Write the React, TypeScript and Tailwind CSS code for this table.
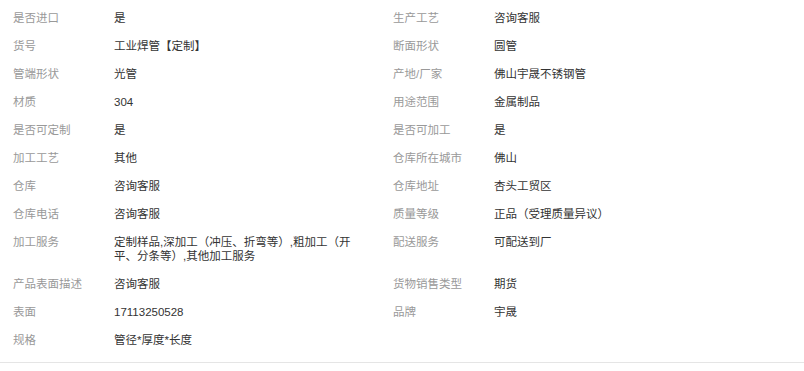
import React from "react";

type Attr = { label: string; value: string };

const rows: [Attr, Attr | null][] = [
  [{ label: "是否进口", value: "是" }, { label: "生产工艺", value: "咨询客服" }],
  [{ label: "货号", value: "工业焊管【定制】" }, { label: "断面形状", value: "圆管" }],
  [{ label: "管端形状", value: "光管" }, { label: "产地/厂家", value: "佛山宇晟不锈钢管" }],
  [{ label: "材质", value: "304" }, { label: "用途范围", value: "金属制品" }],
  [{ label: "是否可定制", value: "是" }, { label: "是否可加工", value: "是" }],
  [{ label: "加工工艺", value: "其他" }, { label: "仓库所在城市", value: "佛山" }],
  [{ label: "仓库", value: "咨询客服" }, { label: "仓库地址", value: "杏头工贸区" }],
  [{ label: "仓库电话", value: "咨询客服" }, { label: "质量等级", value: "正品（受理质量异议）" }],
  [
    { label: "加工服务", value: "定制样品,深加工（冲压、折弯等）,粗加工（开平、分条等）,其他加工服务" },
    { label: "配送服务", value: "可配送到厂" },
  ],
  [{ label: "产品表面描述", value: "咨询客服" }, { label: "货物销售类型", value: "期货" }],
  [{ label: "表面", value: "17113250528" }, { label: "品牌", value: "宇晟" }],
  [{ label: "规格", value: "管径*厚度*长度" }, null],
];

function Cell({ item }: { item: Attr | null }) {
  if (!item) return <div />;
  return (
    <div className="flex py-[7px] leading-[14px]">
      <div className="w-[101px] shrink-0 text-[#999999]">{item.label}</div>
      <div className="w-[242px] break-all text-[#333333]">{item.value}</div>
    </div>
  );
}

export default function App() {
  return (
    <div
      className="w-[804px] bg-white text-[11.5px]"
      style={{ fontFamily: '"Liberation Sans", "Noto Sans CJK SC", sans-serif' }}
    >
      <div className="grid grid-cols-[380px_380px] border-b border-[#e5e5e5] pb-[8px] pl-[13px] pt-[4px]">
        {rows.map(([a, b], i) => (
          <React.Fragment key={i}>
            <Cell item={a} />
            <Cell item={b} />
          </React.Fragment>
        ))}
      </div>
    </div>
  );
}
